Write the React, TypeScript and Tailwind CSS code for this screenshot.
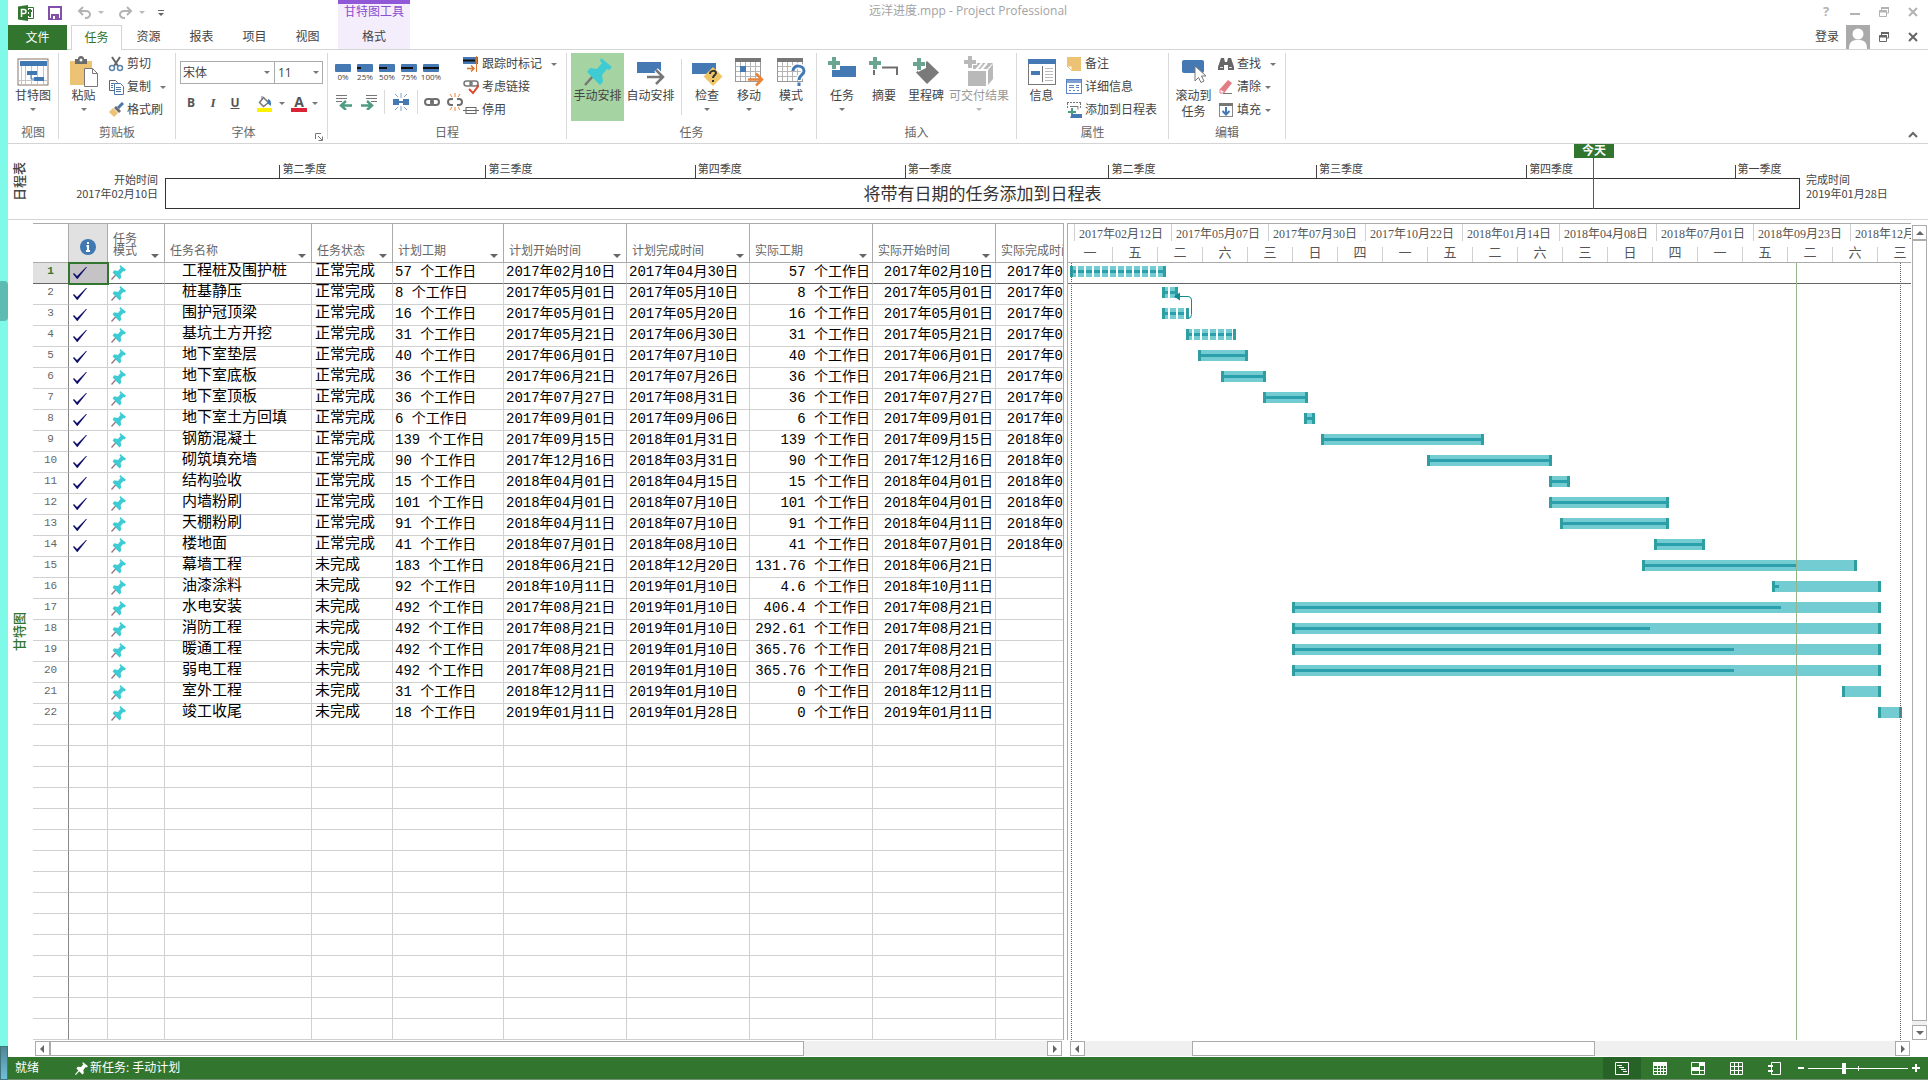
import type { ReactNode } from 'react';

const UI_FONT = "font-['Open_Sans','Noto_Sans_CJK_SC',sans-serif]";
const SHEET_FONT = "font-['Liberation_Mono','Noto_Sans_CJK_SC',monospace]";
const SCALE_FONT = "font-['Liberation_Serif','Noto_Sans_CJK_SC',serif]";

const ROW_COUNT = 37;
const PX_PER_DAY = 1.1536;
const ORIGIN = Date.UTC(2017, 1, 12);

type Task = {
  name: string;
  days: number;
  start: string;
  finish: string;
  actual: string;
  done: boolean;
  split?: boolean;
  progress?: number;
};

const TASKS: Task[] = [
  { name: '工程桩及围护桩', days: 57, start: '2017-02-10', finish: '2017-04-30', actual: '57', done: true, split: true },
  { name: '桩基静压', days: 8, start: '2017-05-01', finish: '2017-05-10', actual: '8', done: true, split: true },
  { name: '围护冠顶梁', days: 16, start: '2017-05-01', finish: '2017-05-20', actual: '16', done: true, split: true },
  { name: '基坑土方开挖', days: 31, start: '2017-05-21', finish: '2017-06-30', actual: '31', done: true, split: true },
  { name: '地下室垫层', days: 40, start: '2017-06-01', finish: '2017-07-10', actual: '40', done: true },
  { name: '地下室底板', days: 36, start: '2017-06-21', finish: '2017-07-26', actual: '36', done: true },
  { name: '地下室顶板', days: 36, start: '2017-07-27', finish: '2017-08-31', actual: '36', done: true },
  { name: '地下室土方回填', days: 6, start: '2017-09-01', finish: '2017-09-06', actual: '6', done: true },
  { name: '钢筋混凝土', days: 139, start: '2017-09-15', finish: '2018-01-31', actual: '139', done: true },
  { name: '砌筑填充墙', days: 90, start: '2017-12-16', finish: '2018-03-31', actual: '90', done: true },
  { name: '结构验收', days: 15, start: '2018-04-01', finish: '2018-04-15', actual: '15', done: true },
  { name: '内墙粉刷', days: 101, start: '2018-04-01', finish: '2018-07-10', actual: '101', done: true },
  { name: '天棚粉刷', days: 91, start: '2018-04-11', finish: '2018-07-10', actual: '91', done: true },
  { name: '楼地面', days: 41, start: '2018-07-01', finish: '2018-08-10', actual: '41', done: true },
  { name: '幕墙工程', days: 183, start: '2018-06-21', finish: '2018-12-20', actual: '131.76', done: false, progress: 0.715 },
  { name: '油漆涂料', days: 92, start: '2018-10-11', finish: '2019-01-10', actual: '4.6', done: false, progress: 0.06 },
  { name: '水电安装', days: 492, start: '2017-08-21', finish: '2019-01-10', actual: '406.4', done: false, progress: 0.83 },
  { name: '消防工程', days: 492, start: '2017-08-21', finish: '2019-01-10', actual: '292.61', done: false, progress: 0.608 },
  { name: '暖通工程', days: 492, start: '2017-08-21', finish: '2019-01-10', actual: '365.76', done: false, progress: 0.75 },
  { name: '弱电工程', days: 492, start: '2017-08-21', finish: '2019-01-10', actual: '365.76', done: false, progress: 0.75 },
  { name: '室外工程', days: 31, start: '2018-12-11', finish: '2019-01-10', actual: '0', done: false, progress: 0 },
  { name: '竣工收尾', days: 18, start: '2019-01-11', finish: '2019-01-28', actual: '0', done: false, progress: 0 },
];

const MAJOR = [
  '2017年02月12日', '2017年05月07日', '2017年07月30日', '2017年10月22日', '2018年01月14日',
  '2018年04月08日', '2018年07月01日', '2018年09月23日', '2018年12月16日',
];
const MINOR = '一五二六三日四一五二六三日四一五二六三'.split('');

const QUARTERS = [
  { label: '第二季度', at: 7 },
  { label: '第三季度', at: 19.6 },
  { label: '第四季度', at: 32.4 },
  { label: '第一季度', at: 45.25 },
  { label: '第二季度', at: 57.7 },
  { label: '第三季度', at: 70.4 },
  { label: '第四季度', at: 83.25 },
  { label: '第一季度', at: 96 },
];

const HEADERS = ['任务名称', '任务状态', '计划工期', '计划开始时间', '计划完成时间', '实际工期', '实际开始时间', '实际完成时间'];

const dayOffset = (date: string, extra = 0) => {
  const [y, m, d] = date.split('-').map(Number);
  return ((Date.UTC(y, m - 1, d) - ORIGIN) / 86400000 + extra) * PX_PER_DAY + 6;
};

const cnDate = (date: string) => {
  const [y, m, d] = date.split('-');
  return `${y}年${m}月${d}日`;
};

/* ---------- icons ---------- */

function Svg({ w, h, children, className = '' }: { w: number; h: number; children: ReactNode; className?: string }) {
  return (
    <svg width={w} height={h} viewBox={`0 0 ${w} ${h}`} fill="none" className={`shrink-0 ${className}`} aria-hidden="true">
      {children}
    </svg>
  );
}

const Caret = ({ className = '' }: { className?: string }) => (
  <Svg w={6} h={3} className={className}><path d="M0 0h6L3 3z" fill="#777" /></Svg>
);

const Pin = ({ size = 16, color = '#3fcbd3', needle = '#96707c' }: { size?: number; color?: string; needle?: string }) => (
  <svg width={size} height={size} viewBox="0 0 28 28" className="shrink-0" aria-hidden="true">
    <path d="M1 27L10 17" stroke={needle} strokeWidth="2.5" />
    <path d="M17 0l11 9-3 3-2-1-5 6 1 7-3 3L3 14l3-4 7 1 5-6-2-2z" fill={color} />
  </svg>
);

const RestoreIcon = ({ color }: { color: string }) => (
  <Svg w={12} h={12}>
    <path d="M3.500 4V1.500h7v5.500H8M1.500 4.500h7v6h-7z" stroke={color} />
    <path d="M1 5.500h8M3 2h8" stroke={color} strokeWidth="2" />
  </Svg>
);

const CloseIcon = ({ color }: { color: string }) => (
  <Svg w={10} h={10}><path d="M1 1l8 8M9 1L1 9" stroke={color} strokeWidth="2" /></Svg>
);

const GanttIcon = () => (
  <Svg w={32} h={28}>
    <rect x="1" y="1" width="30" height="26" fill="#fff" stroke="#8a7468" />
    <rect x="3" y="3" width="27" height="5" fill="#3f78b3" />
    <path d="M4.500 8v18M8.500 8v18M14.500 8v18M20.500 8v18M26.500 8v18M2 22.500h28" stroke="#c4c4c4" />
    <path d="M10 13h10v4H10zM17 19h10v4H17z" fill="#3f78b3" />
    <path d="M14 17v4h3" stroke="#3f78b3" />
  </Svg>
);

const PasteIcon = () => (
  <Svg w={30} h={32}>
    <path d="M1 5h22v24H1z" fill="#ecc375" />
    <path d="M6 3h3a3 3 0 016 0h3v5H6z" fill="#6b6b6b" />
    <circle cx="12" cy="4" r="1.500" fill="#fff" />
    <path d="M15.500 12.500h8l5 5v13h-13z" fill="#fff" stroke="#777" />
    <path d="M23.500 12.500v5h5" stroke="#777" />
  </Svg>
);

const CutIcon = () => (
  <Svg w={16} h={16}>
    <path d="M4 1l6 9M12 1L6 10" stroke="#666" strokeWidth="2" />
    <circle cx="4" cy="12" r="2.500" stroke="#5d84ad" strokeWidth="1.500" />
    <circle cx="12" cy="12" r="2.500" stroke="#5d84ad" strokeWidth="1.500" />
  </Svg>
);

const CopyIcon = () => (
  <Svg w={16} h={16}>
    <path d="M1.500 1.500h6l2 2v8h-8z" fill="#fff" stroke="#666" />
    <path d="M6.500 4.500h6l3 3v8h-9z" fill="#fff" stroke="#4b78a8" />
    <path d="M3 4.500h3M3 6.500h2M3 8.500h2M8 8.500h5M8 10.500h5M8 12.500h5" stroke="#4b78a8" />
  </Svg>
);

const BrushIcon = () => (
  <Svg w={16} h={16}>
    <path d="M15 1l-5 5" stroke="#4a76a8" strokeWidth="3" />
    <path d="M8 4l5 5-2 2-5-5z" fill="#6b6b6b" />
    <path d="M5 6l5 5-4 4-5-5z" fill="#ecc375" />
  </Svg>
);

const FillColorIcon = () => (
  <Svg w={17} h={17}>
    <path d="M7.500 2.500l5 5-5 4-4-4z" fill="#fff" stroke="#777" strokeWidth="1.500" />
    <path d="M6 5V1" stroke="#777" />
    <path d="M12 4c3 1 3.500 4 2.500 7L11.500 8z" fill="#3f78b3" />
    <rect x="1" y="13" width="15" height="4" fill="#fff200" />
  </Svg>
);

const ProgressIcon = ({ pct }: { pct: number }) => (
  <Svg w={16} h={8}>
    <rect width="16" height="8" rx="1" fill="#4479b4" />
    <rect x="0" y="3" width={(16 * pct) / 100} height="2" fill="#111" />
  </Svg>
);

const IndentIcon = ({ flip = false }: { flip?: boolean }) => (
  <Svg w={18} h={16} className={flip ? '-scale-x-100' : ''}>
    <path d="M1 1.500h11M1 4.500h11M1 7.500h6" stroke="#777" />
    <path d="M17 11.500H7M11 7l-5 4.500 5 4.500" stroke="#4f9c80" strokeWidth="2.500" />
  </Svg>
);

const SplitIcon = () => (
  <Svg w={18} h={18}>
    <path d="M1 6h6v6H1zM11 6h6v6h-6z" fill="#4479b4" />
    <path d="M9 0v5M9 13v5M3 1l3 3M15 1l-3 3M3 17l3-3M15 17l-3-3" stroke="#7da6d0" />
    <path d="M5 9h8" stroke="#4479b4" strokeWidth="2" />
  </Svg>
);

const LinkIcon = () => (
  <Svg w={16} h={10}>
    <rect x="1" y="2" width="8" height="6" rx="3" stroke="#6e6e6e" strokeWidth="2" />
    <rect x="7" y="2" width="8" height="6" rx="3" stroke="#6e6e6e" strokeWidth="2" />
  </Svg>
);

const UnlinkIcon = () => (
  <Svg w={16} h={18}>
    <path d="M6 6H4a3 3 0 000 6h2M10 6h2a3 3 0 010 6h-2" stroke="#6e6e6e" strokeWidth="2" />
    <path d="M8 0v4M8 14v4M3 1l2 3M13 1l-2 3M3 17l2-3M13 17l-2-3" stroke="#e8853a" />
  </Svg>
);

const TrackIcon = () => (
  <Svg w={16} h={16}>
    <path d="M0 1h15v7H0z" fill="#4479b4" />
    <path d="M0 4.500h12" stroke="#111" strokeWidth="2" />
    <path d="M13.500 0v16" stroke="#d8762e" />
    <path d="M4 12.500h7M8 9.500l3 3-3 3" stroke="#d8762e" strokeWidth="1.500" />
  </Svg>
);

const RespectIcon = () => (
  <Svg w={16} h={16}>
    <rect x="1" y="2" width="8" height="5" rx="2.500" stroke="#777" strokeWidth="1.500" />
    <rect x="7" y="2" width="8" height="5" rx="2.500" stroke="#777" strokeWidth="1.500" />
    <path d="M6 10l4 4 6-8" stroke="#d84b32" strokeWidth="2" />
  </Svg>
);

const InactiveIcon = () => (
  <Svg w={16} h={16}>
    <rect x="3" y="5.500" width="10" height="6" stroke="#666" />
    <path d="M0 8.500h16" stroke="#666" />
  </Svg>
);

const AutoIcon = () => (
  <Svg w={30} h={28}>
    <path d="M1 4h24v11H1z" fill="#4479b4" />
    <path d="M11 19h15M20 12l7 7-7 7" stroke="#fff" strokeWidth="5" />
    <path d="M11 19h15M20 12l7 7-7 7" stroke="#777" strokeWidth="2.500" />
  </Svg>
);

const InspectIcon = () => (
  <Svg w={32} h={28}>
    <path d="M1 5h24v11H1z" fill="#4479b4" />
    <path d="M22 9l9.500 9.500L22 28l-9.500-9.500z" fill="#f0c567" />
    <path d="M19 16c0-4 6-4 6-1 0 2-3 2-3 5M22 22v2" stroke="#333" strokeWidth="2" />
  </Svg>
);

const CalendarGrid = () => (
  <>
    <rect x="1.500" y="1.500" width="25" height="23" fill="#fff" stroke="#999" />
    <path d="M1 1h26v4H1z" fill="#777" />
    <path d="M6.500 5v19M11.500 5v19M16.500 5v19M21.500 5v19M2 9.500h24M2 14.500h24M2 19.500h24" stroke="#b5b5b5" />
  </>
);

const MoveIcon = () => (
  <Svg w={30} h={30}>
    <CalendarGrid />
    <path d="M6 9h6v6H6z" fill="#4479b4" />
    <path d="M14 22.500h13M22 16.500l6 6-6 6" stroke="#e8853a" strokeWidth="2.500" />
  </Svg>
);

const ModeIcon = () => (
  <Svg w={30} h={30}>
    <CalendarGrid />
    <path d="M17 14c0-7 11-6 11 0 0 4-5 4-5 9M23 26v3" stroke="#fff" strokeWidth="6" />
    <path d="M17 14c0-7 11-6 11 0 0 4-5 4-5 9M23 25.500v3.500" stroke="#4479b4" strokeWidth="3" />
  </Svg>
);

const Plus = ({ color = '#69a58f' }: { color?: string }) => (
  <path d="M4 0h4v4h4v4H8v4H4V8H0V4h4z" fill={color} />
);

const InsertTaskIcon = () => (
  <Svg w={28} h={30}>
    <path d="M4 9h24v11H4z" fill="#4479b4" />
    <path d="M0 8h13V4h-1v9H3z" fill="#fff" />
    <Plus />
  </Svg>
);

const SummaryIcon = () => (
  <Svg w={30} h={30}>
    <path d="M5 18v-7.500h23V18" stroke="#6e6e6e" strokeWidth="2" />
    <path d="M2 8h13V3h-2v10H4z" fill="#fff" />
    <Plus />
  </Svg>
);

const MilestoneIcon = () => (
  <Svg w={26} h={28}>
    <path d="M14 3l12 11.500L14 26 3 14.500z" fill="#7a7a7a" />
    <path d="M3 3h10v7l-8 4z" fill="#fff" />
    <Plus />
  </Svg>
);

const DeliverableIcon = () => (
  <Svg w={30} h={32}>
    <path d="M4 15h18v15H4zM5 13l6-6h18l-6 6zM24 14l5-6v15l-5 6z" fill="#b9b9b9" />
    <path d="M12 14l6-7M17 14l6-7" stroke="#fff" strokeWidth="2" />
    <path d="M0 9h9v4H3zM9 4h4v5H9z" fill="#fff" />
    <Plus color="#b9b9b9" />
  </Svg>
);

const InfoIcon = () => (
  <Svg w={28} h={28}>
    <rect x=".5" y="1.500" width="27" height="25" fill="#fff" stroke="#777" />
    <path d="M0 1h28v5H0z" fill="#4479b4" />
    <path d="M3 13h9v4H3z" fill="#4479b4" />
    <path d="M14.500 8v16" stroke="#777" />
    <path d="M17 10.500h8M17 13.500h8M17 16.500h8M17 19.500h8M17 22.500h8" stroke="#bbb" />
  </Svg>
);

const NoteIcon = () => (
  <Svg w={16} h={16}>
    <path d="M1 1h14v14H6L1 10z" fill="#ecc375" />
    <path d="M1 10h5v5z" fill="#fff" stroke="#ecc375" />
  </Svg>
);

const DetailIcon = () => (
  <Svg w={16} h={16}>
    <rect x=".5" y=".5" width="15" height="14" fill="#fff" stroke="#5b84c4" />
    <path d="M1 1h14v3H1z" fill="#7fa0d4" />
    <path d="M3 6.500h5M3 8.500h5M10 6.500h3M10 8.500h3M3 11.500h2M7 11.500h2M11 11.500h2" stroke="#5b84c4" />
  </Svg>
);

const AddTimelineIcon = () => (
  <Svg w={16} h={16}>
    <path d="M1.500 6V1M14.500 6V1M1 .5h14" stroke="#777" strokeDasharray="2 1" />
    <path d="M4 4.500h8v3" stroke="#777" />
    <path d="M6 6v8M2 10h8" stroke="#4f9c80" strokeWidth="2" />
    <path d="M6 12h10v4H4z" fill="#4479b4" />
  </Svg>
);

const ScrollToIcon = () => (
  <Svg w={26} h={28}>
    <rect x="1" y="2" width="22" height="13" rx="2" fill="#4479b4" />
    <path d="M14 8v15l3.500-3.500 2.500 5 3-1.500-2.500-5h4.500z" fill="#fff" stroke="#777" />
  </Svg>
);

const FindIcon = () => (
  <Svg w={16} h={16}>
    <path d="M3 2h3l1 4h2l1-4h3l3 9v3h-6V9H6v5H0v-3z" fill="#666" />
    <path d="M2 11.500h3M11 11.500h3" stroke="#ddd" />
  </Svg>
);

const EraserIcon = () => (
  <Svg w={16} h={16}>
    <path d="M10 1l4 3-7 9-5-3z" fill="#e47c88" />
    <path d="M2 10l5 3-2 1H2z" fill="#fff" stroke="#e47c88" />
    <path d="M5 14.500h9" stroke="#777" />
  </Svg>
);

const FillIcon = () => (
  <Svg w={16} h={16}>
    <rect x="1.500" y="1.500" width="13" height="13" fill="#fff" stroke="#888" />
    <path d="M1 1h14v3H1z" fill="#777" />
    <path d="M8 5v8M4.500 9L8 12.500 11.500 9" stroke="#4479b4" strokeWidth="2" />
  </Svg>
);

/* ---------- ribbon ---------- */

function BigButton({ icon, label, width, caret, active, disabled }: {
  icon: ReactNode; label: string; width: string; caret?: boolean; active?: boolean; disabled?: boolean;
}) {
  return (
    <button
      disabled={disabled}
      className={`flex h-[68px] shrink-0 flex-col items-center pt-[3px] leading-4 ${width} ${active ? 'bg-[#a5d3a1]' : ''} ${disabled ? 'text-[#999]' : ''}`}
    >
      <span className="flex h-8 items-center">{icon}</span>
      <span className="-mx-2 whitespace-pre-line">{label}</span>
      {caret && <Caret className={`mt-1 ${disabled ? 'opacity-50' : ''}`} />}
    </button>
  );
}

function SmallButton({ icon, label, caret }: { icon: ReactNode; label: string; caret?: string }) {
  return (
    <button className="flex h-[23px] items-center pb-px text-left leading-4 whitespace-nowrap">
      {icon}
      <span className="ml-[3px]">{label}</span>
      {caret && <Caret className={caret} />}
    </button>
  );
}

function Group({ label, width, children, launcher }: { label: string; width: string; children: ReactNode; launcher?: boolean }) {
  return (
    <section className={`mt-[3px] mb-1 flex shrink-0 flex-col border-r border-[#dadada] ${width}`}>
      <div className="flex h-[69px] shrink-0 items-start">{children}</div>
      <div className={`relative pt-[3px] text-center leading-4 text-[#666] ${launcher ? 'pr-4' : ''}`}>
        {label}
        {launcher && (
          <button aria-label="字体设置" className="absolute right-1 bottom-0">
            <Svg w={8} h={8}><path d="M.5 6V.5H6M3 3l4 4M7.500 3.500v4h-4" stroke="#777" /></Svg>
          </button>
        )}
      </div>
    </section>
  );
}

const VRule = () => <span className="h-6 w-px bg-[#dadada]" />;

function TitleBar() {
  return (
    <header className="grid h-[25px] grid-cols-[1fr_auto_1fr]">
      <div className="flex">
        <div className="flex w-[330px] items-center pl-[10px]">
          <Svg w={16} h={16}>
            <path d="M0 1.500L10 0v16L0 14.500z" fill="#31752f" />
            <path d="M10 2.500h5.500v11H10" fill="#fff" stroke="#31752f" />
            <path d="M10 6h4M10 10h3M12 4v8" stroke="#31752f" strokeWidth="2" />
            <path d="M3.500 12V4.500H6a2 2 0 010 4H3.500" stroke="#fff" strokeWidth="1.500" />
          </Svg>
          <button aria-label="保存" className="ml-[14px]">
            <Svg w={14} h={14}>
              <path d="M1 1h12v12H1z" stroke="#8250a8" strokeWidth="2" />
              <path d="M3 8h8v5H3z" fill="#8250a8" />
              <path d="M5 10h2v3H5z" fill="#fff" />
            </Svg>
          </button>
          <button aria-label="撤消" className="ml-[15px] flex items-center gap-[6px]">
            <Svg w={15} h={13}><path d="M6 1L2 5l4 4M2 5h7a4 3.500 0 010 7H8" stroke="#b3b3b3" strokeWidth="2" /></Svg>
            <Caret className="opacity-50" />
          </button>
          <button aria-label="恢复" className="ml-[14px] flex items-center gap-[6px]">
            <Svg w={15} h={13}><path d="M9 1l4 4-4 4M13 5H6a4 3.500 0 000 7h1" stroke="#b3b3b3" strokeWidth="2" /></Svg>
            <Caret className="opacity-50" />
          </button>
          <button aria-label="自定义快速访问工具栏" className="ml-[13px]">
            <Svg w={6} h={6}><path d="M0 .5h6" stroke="#666" /><path d="M0 3h6L3 6z" fill="#666" /></Svg>
          </button>
        </div>
        <div className="w-[72px] border-t-4 border-[#9058d6] bg-[#f4eefc] text-center leading-4 text-[#8a4fd0]">甘特图工具</div>
      </div>
      <h1 className="pt-[3px] leading-4 text-[#a3a3a3]">远洋进度.mpp - Project Professional</h1>
      <div className="flex items-center justify-end gap-[18px] pr-[10px] pb-px">
        <button aria-label="帮助" className="w-3 text-[13px] font-bold text-[#b3b3b3]">?</button>
        <button aria-label="最小化"><Svg w={10} h={10}><path d="M0 7h10" stroke="#b3b3b3" strokeWidth="2" /></Svg></button>
        <button aria-label="还原"><RestoreIcon color="#b3b3b3" /></button>
        <button aria-label="关闭"><CloseIcon color="#b3b3b3" /></button>
      </div>
    </header>
  );
}

function TabBar() {
  return (
    <nav className="flex h-[25px] border-b border-[#d5d5d5]">
      <button className="h-[25px] w-[59px] bg-[#31752f] text-white">文件</button>
      <button className="ml-1 h-[25px] w-[51px] border border-b-0 border-[#d5d5d5] bg-white text-[#31752f]">任务</button>
      {['资源', '报表', '项目', '视图'].map(tab => (
        <button key={tab} className="w-[53px]">{tab}</button>
      ))}
      <button className="ml-1 w-[72px] bg-[#f4eefc]">格式</button>
      <div className="ml-auto flex items-center pr-[10px]">
        <a href="#login" className="mr-[7px] pb-px">登录</a>
        <Svg w={24} h={24} className="mr-2">
          <rect width="24" height="24" fill="#aaa" />
          <circle cx="12" cy="9" r="5.500" fill="#fff" />
          <path d="M3 24c0-8 4-9 9-9s9 1 9 9z" fill="#fff" />
        </Svg>
        <button aria-label="还原窗口" className="mr-[18px]"><RestoreIcon color="#666" /></button>
        <button aria-label="关闭窗口"><CloseIcon color="#666" /></button>
      </div>
    </nav>
  );
}

function Ribbon() {
  return (
    <div className="flex h-[94px] border-b border-[#d5d5d5]">
      <Group label="视图" width="w-[51px]">
        <BigButton icon={<GanttIcon />} label="甘特图" width="w-[50px]" caret />
      </Group>
      <Group label="剪贴板" width="w-[117px]">
        <BigButton icon={<PasteIcon />} label="粘贴" width="w-[49px]" caret />
        <div className="flex flex-col">
          <SmallButton icon={<CutIcon />} label="剪切" />
          <SmallButton icon={<CopyIcon />} label="复制" caret="ml-[9px]" />
          <SmallButton icon={<BrushIcon />} label="格式刷" />
        </div>
      </Group>
      <Group label="字体" width="w-[152px]" launcher>
        <div className="pt-[8px] pl-1">
          <div className="flex">
            <div className="relative">
              <select aria-label="字体名称" className="h-[23px] w-[95px] appearance-none border border-[#ababab] bg-white pl-[2px]">
                <option>宋体</option>
              </select>
              <Caret className="pointer-events-none absolute top-[10px] right-[5px]" />
            </div>
            <div className="relative -ml-px">
              <select aria-label="字号" className="h-[23px] w-[49px] appearance-none border border-[#ababab] bg-white pl-[3px]">
                <option>11</option>
              </select>
              <Caret className="pointer-events-none absolute top-[10px] right-[4px]" />
            </div>
          </div>
          <div className="mt-[7px] flex h-6 items-center text-[12px] text-[#555]">
            <button className="w-[22px] font-bold">B</button>
            <button className="w-[22px] font-['Liberation_Serif',serif] text-[13px] font-bold italic">I</button>
            <button className="w-[22px] font-bold underline">U</button>
            <span className="mx-[4px]"><VRule /></span>
            <button aria-label="背景色" className="flex items-center gap-[6px] pl-[2px]"><FillColorIcon /><Caret /></button>
            <button aria-label="字体颜色" className="ml-[6px] flex items-center gap-[5px]">
              <span className="w-4 border-b-4 border-[#dc2335] text-center text-[14px] leading-[13px] font-bold">A</span>
              <Caret />
            </button>
          </div>
        </div>
      </Group>
      <Group label="日程" width="w-[239px]">
        <div className="w-[135px] pt-[11px] pl-[7px]">
          <div className="flex h-[26px] gap-[6px]">
            {[0, 25, 50, 75, 100].map(p => (
              <button key={p} className="flex w-4 flex-col items-center text-[8px] leading-[10px]">
                <ProgressIcon pct={p} />
                <span>{p}%</span>
              </button>
            ))}
          </div>
          <div className="flex h-6 items-center justify-between">
            <button aria-label="降级"><IndentIcon /></button>
            <button aria-label="升级"><IndentIcon flip /></button>
            <VRule />
            <button aria-label="拆分任务"><SplitIcon /></button>
            <VRule />
            <button aria-label="链接任务"><LinkIcon /></button>
            <button aria-label="取消链接"><UnlinkIcon /></button>
          </div>
        </div>
        <div className="flex flex-col">
          <SmallButton icon={<TrackIcon />} label="跟踪时标记" caret="ml-[9px]" />
          <SmallButton icon={<RespectIcon />} label="考虑链接" />
          <SmallButton icon={<InactiveIcon />} label="停用" />
        </div>
      </Group>
      <Group label="任务" width="w-[250px]">
        <span className="w-1" />
        <BigButton icon={<Pin size={28} needle="#777" />} label="手动安排" width="w-[53px]" active />
        <BigButton icon={<AutoIcon />} label="自动安排" width="w-[53px]" />
        <span className="mx-1 mt-[6px] h-14 w-px bg-[#dadada]" />
        <BigButton icon={<InspectIcon />} label="检查" width="w-[42px]" caret />
        <BigButton icon={<MoveIcon />} label="移动" width="w-[42px]" caret />
        <BigButton icon={<ModeIcon />} label="模式" width="w-[42px]" caret />
      </Group>
      <Group label="插入" width="w-[200px]">
        <span className="w-1" />
        <BigButton icon={<InsertTaskIcon />} label="任务" width="w-[42px]" caret />
        <BigButton icon={<SummaryIcon />} label="摘要" width="w-[42px]" />
        <BigButton icon={<MilestoneIcon />} label="里程碑" width="w-[42px]" />
        <BigButton icon={<DeliverableIcon />} label="可交付结果" width="w-[64px]" caret disabled />
      </Group>
      <Group label="属性" width="w-[152px]">
        <BigButton icon={<InfoIcon />} label="信息" width="w-[49px]" />
        <div className="flex flex-col">
          <SmallButton icon={<NoteIcon />} label="备注" />
          <SmallButton icon={<DetailIcon />} label="详细信息" />
          <SmallButton icon={<AddTimelineIcon />} label="添加到日程表" />
        </div>
      </Group>
      <Group label="编辑" width="w-[117px]">
        <BigButton icon={<ScrollToIcon />} label={'滚动到\n任务'} width="w-[49px]" />
        <div className="flex flex-col">
          <SmallButton icon={<FindIcon />} label="查找" caret="ml-[9px]" />
          <SmallButton icon={<EraserIcon />} label="清除" caret="ml-[4px]" />
          <SmallButton icon={<FillIcon />} label="填充" caret="ml-[4px]" />
        </div>
      </Group>
      <button aria-label="折叠功能区" className="mt-auto mr-[10px] mb-[5px] ml-auto">
        <Svg w={10} h={7}><path d="M1 6l4-4 4 4" stroke="#666" strokeWidth="2" /></Svg>
      </button>
    </div>
  );
}

/* ---------- timeline ---------- */

function SideLabel({ children, className }: { children: ReactNode; className: string }) {
  return (
    <div className={`flex w-[25px] shrink-0 items-center justify-center pr-1 ${className}`}>
      <span className="rotate-180 text-[13px] leading-4 font-medium [text-orientation:sideways] [writing-mode:vertical-rl]">{children}</span>
    </div>
  );
}

function Timeline() {
  return (
    <div className="flex h-[76px] border-b border-[#d5d5d5] font-['Noto_Sans_CJK_SC',sans-serif] text-[11px] leading-[14px]">
      <SideLabel className="text-[#444]">日程表</SideLabel>
      <p className="w-[132px] shrink-0 pt-[28px] pr-[7px] text-right text-[#444]">开始时间<br />2017年02月10日</p>
      <div className="relative flex-1 pt-[34px]">
        <div className="flex h-[31px] items-center justify-center border border-[#333] pb-[2px] text-[17px] text-[#333]">
          将带有日期的任务添加到日程表
        </div>
        {QUARTERS.map((q, i) => (
          <span key={i} className="absolute top-[21px] h-[13px] border-l border-[#444] pl-[2px] leading-[6px] text-[#444]" style={{ left: `${q.at}%` }}>
            {q.label}
          </span>
        ))}
        <div className="absolute top-0 left-[87.4%] flex h-[65px] w-10 -translate-x-1/2 flex-col items-center">
          <span className="h-[14px] w-full bg-[#31752f] text-center text-[12px] leading-3 font-bold text-white">今天</span>
          <span className="w-px flex-1 bg-[#31752f]" />
        </div>
      </div>
      <p className="w-[128px] shrink-0 pt-[28px] pl-[6px] text-[#444]">完成时间<br />2019年01月28日</p>
    </div>
  );
}

/* ---------- sheet ---------- */

const HeaderArrow = () => <Svg w={8} h={4}><path d="M0 0h8L4 4z" fill="#666" /></Svg>;

function Sheet() {
  const cell = 'border-r border-b border-[#d0d0d0] p-0 pb-[3px] whitespace-nowrap';
  return (
    <div className="w-[1031px] overflow-hidden border-t border-r border-[#ababab]">
      <table className={`w-[1086px] table-fixed border-separate border-spacing-0 text-[14px] leading-4 text-black ${SHEET_FONT}`}>
        <colgroup>
          <col className="w-[36px]" />
          <col className="w-[39px]" />
          <col className="w-[57px]" />
          <col className="w-[147px]" />
          <col className="w-[81px]" />
          <col className="w-[111px]" />
          <col className="w-[123px]" />
          <col className="w-[123px]" />
          <col className="w-[123px]" />
          <col className="w-[123px]" />
          <col className="w-[123px]" />
        </colgroup>
        <thead>
          <tr className="h-[39px] text-[12px] text-[#666] [&>th]:border-b [&>th]:border-[#ababab] [&>th]:p-0 [&>th]:font-normal">
            <th className="border-r" />
            <th className="border-r bg-[#e1e1e1]" aria-label="标记">
              <Svg w={16} h={16} className="mx-auto mt-2">
                <circle cx="8" cy="8" r="8" fill="#3f78b3" />
                <path d="M8 3v2M6.500 7H8v5M6 12h4" stroke="#fff" strokeWidth="2" />
              </Svg>
            </th>
            <th className="border-r align-bottom">
              <div className="flex items-end justify-between pr-[5px] pb-[4px] pl-[5px]">
                <span className="w-6 leading-3">任务模式</span>
                <HeaderArrow />
              </div>
            </th>
            {HEADERS.map(h => (
              <th key={h} className="border-r align-bottom">
                <div className="flex items-end justify-between pr-[5px] pb-[4px] pl-[5px]">
                  <span className="leading-3">{h}</span>
                  <HeaderArrow />
                </div>
              </th>
            ))}
          </tr>
        </thead>
        <tbody>
          {Array.from({ length: ROW_COUNT }, (_, i) => {
            const t = TASKS[i];
            const first = i === 0;
            return (
              <tr key={i} className={`h-[21px] ${first ? '[&>td]:border-b-[#666] [&>th]:border-b-[#666]' : ''}`}>
                <th
                  className={`border-r border-b border-[#d0d0d0] border-r-[#888] p-0 pb-1 text-center text-[11px] leading-4 ${
                    first ? 'bg-[#e1e1e1] font-bold text-[#31752f]' : 'font-normal text-[#666]'
                  }`}
                >
                  {t ? i + 1 : ''}
                </th>
                <td className={`${cell} ${first ? 'bg-[#c6c3c6] outline-2 -outline-offset-1 outline-[#31752f]' : ''}`}>
                  {t?.done && (
                    <Svg w={16} h={14} className="mt-[3px] ml-[3px]">
                      <path d="M1 8l1-1 3 3L14 1h1L5.500 13H5z" fill="#10106c" />
                    </Svg>
                  )}
                </td>
                <td className={`${cell} pl-[3px]`}>{t && <div className="pt-[2px]"><Pin size={15} /></div>}</td>
                <td className={`${cell} pl-[17px] text-[15px]`}>{t?.name}</td>
                <td className={`${cell} pl-[3px] text-[15px]`}>{t && (t.done ? '正常完成' : '未完成')}</td>
                <td className={`${cell} pl-[2px]`}>{t && `${t.days} 个工作日`}</td>
                <td className={`${cell} pl-[2px]`}>{t && cnDate(t.start)}</td>
                <td className={`${cell} pl-[2px]`}>{t && cnDate(t.finish)}</td>
                <td className={`${cell} pr-[2px] text-right`}>{t && `${t.actual} 个工作日`}</td>
                <td className={`${cell} pr-[2px] text-right`}>{t && cnDate(t.start)}</td>
                <td className={`${cell} pr-[2px] text-right`}>{t?.done && cnDate(t.finish)}</td>
              </tr>
            );
          })}
        </tbody>
      </table>
    </div>
  );
}

/* ---------- chart ---------- */

function Bar({ task, row }: { task: Task; row: number }) {
  const left = Math.floor(dayOffset(task.start)) - 1;
  const width = Math.round(dayOffset(task.finish, 1)) + 2 - left;
  const progress = task.progress ?? 1;
  return (
    <div className="absolute h-[11px]" style={{ left, top: row * 21 + 3, width }}>
      <div
        className={`flex h-full items-center ${
          task.split ? 'bg-[repeating-linear-gradient(90deg,#72ccd2_0_6px,#fff_6px_8px)]' : 'bg-[#72ccd2]'
        }`}
      >
        <div
          className={`h-[3px] ${task.split ? 'bg-[repeating-linear-gradient(90deg,#2b9fac_0_6px,#fff_6px_8px)]' : 'bg-[#2b9fac]'}`}
          style={{ width: `${progress * 100}%` }}
        />
      </div>
      <span className="absolute inset-y-0 left-0 w-[3px] bg-[#2f9ea0]" />
      <span className="absolute inset-y-0 right-0 w-[3px] bg-[#2f9ea0]" />
    </div>
  );
}

function Chart() {
  return (
    <div className="flex min-w-0 flex-1 flex-col overflow-hidden border-t border-l border-[#ababab]">
      <div className={`h-[39px] border-b border-[#ababab] text-[12px] whitespace-nowrap text-[#555] ${SCALE_FONT}`}>
        <div className="flex h-[17px] pl-[6px] leading-5">
          {MAJOR.map(d => (
            <span key={d} className="w-[97px] shrink-0 border-l border-[#d0d0d0] pl-[4px]">{d}</span>
          ))}
        </div>
        <div className="mt-[6px] flex h-[15px] text-center text-[13px] leading-3">
          {MINOR.map((d, i) => (
            <span key={i} className="w-[45px] shrink-0 border-r border-[#d0d0d0]">{d}</span>
          ))}
        </div>
      </div>
      <div className="relative flex-1">
        <div className="h-[21px] border-b border-[#666]" />
        {TASKS.map((t, i) => <Bar key={t.name} task={t} row={i} />)}
        <svg className="absolute top-0 left-0" width="140" height="64" fill="none" aria-hidden="true">
          <path d="M120 55.500q3.500 0 3.500-4V37q0-3.500-3.500-3.500h-10" stroke="#12898c" />
          <path d="M106 33.500l6-4v8z" fill="#12898c" />
        </svg>
        <span className="absolute inset-y-0 left-[3px] border-l border-dotted border-[#666]" />
        <span className="absolute inset-y-0 left-[832px] border-l border-dotted border-[#666]" />
        <span className="absolute inset-y-0 left-[728px] w-px bg-[#94b48c]" />
      </div>
    </div>
  );
}

/* ---------- scrollbars ---------- */

function ScrollArrow({ dir, label }: { dir: 'left' | 'right' | 'up' | 'down'; label: string }) {
  const shape = { left: 'M8 3v8L4 7z', right: 'M5 3v8l4-4z', up: 'M3 9h8L7 5z', down: 'M3 5h8L7 9z' }[dir];
  return (
    <button aria-label={label} className="flex h-[15px] w-[15px] shrink-0 items-center justify-center border border-[#ababab] bg-white">
      <Svg w={13} h={13}><path d={shape} fill="#666" /></Svg>
    </button>
  );
}

function StatusBar() {
  const view = 'flex h-full w-[38px] items-center justify-center';
  return (
    <footer className="flex h-[23px] items-center border-b border-[#6f8f6e] bg-[#31752f] text-white">
      <span className="w-[67px] pl-[7px]">就绪</span>
      <Pin size={13} color="#fff" needle="#fff" />
      <span className="ml-[2px]">新任务: 手动计划</span>
      <div className="ml-auto flex h-full items-center">
        <button aria-label="甘特图" className={`${view} bg-[#276226]`}>
          <Svg w={14} h={13}><path d="M.5.5h13v12H.5zM2 3.500h5M4 5.500h5M6 7.500h5M8 9.500h4" stroke="#fff" /></Svg>
        </button>
        <button aria-label="任务分配状况" className={view}>
          <Svg w={14} h={13}><path d="M0 0h14v4H0z" fill="#fff" /><path d="M.5 4v8.500h13V4M4.500 4v8M7.500 4v8M10.500 4v8M1 6.500h12M1 9.500h12" stroke="#fff" /></Svg>
        </button>
        <button aria-label="工作组规划器" className={view}>
          <Svg w={14} h={13}><path d="M.5.5h13v12H.5zM0 8.500h14M8.500 0v12" stroke="#fff" /><path d="M9 0h5v4H9zM0 5h8v3H0z" fill="#fff" /></Svg>
        </button>
        <button aria-label="资源工作表" className={view}>
          <Svg w={13} h={13}><path d="M.5.5h12v12H.5zM4.500 0v13M8.500 0v13M0 4.500h13M0 8.500h13" stroke="#fff" /></Svg>
        </button>
        <button aria-label="报表" className={view}>
          <Svg w={13} h={13}><path d="M3.500 3V.5h9v12h-9V10M3.500 5v3" stroke="#fff" /><path d="M0 4h5M0 9h5" stroke="#fff" strokeWidth="2" /></Svg>
        </button>
        <button aria-label="缩小" className="ml-[5px]"><Svg w={6} h={10}><path d="M0 5h6" stroke="#fff" strokeWidth="2" /></Svg></button>
        <input
          type="range"
          aria-label="显示比例"
          min={0}
          max={100}
          defaultValue={35}
          className="mx-1 h-3 w-[100px] appearance-none bg-[linear-gradient(#fff,#fff),linear-gradient(#fff,#fff)] bg-[length:100%_1px,1px_5px] bg-[position:center,center] bg-no-repeat [&::-webkit-slider-thumb]:h-[11px] [&::-webkit-slider-thumb]:w-1 [&::-webkit-slider-thumb]:appearance-none [&::-webkit-slider-thumb]:bg-white"
        />
        <button aria-label="放大" className="mr-2"><Svg w={8} h={8}><path d="M0 4h8M4 0v8" stroke="#fff" strokeWidth="2" /></Svg></button>
      </div>
    </footer>
  );
}

export default function App() {
  return (
    <div className={`flex min-h-screen bg-white text-[12px] text-[#444] ${UI_FONT}`}>
      <div className="flex w-2 shrink-0 flex-col bg-[#80fae8]">
        <span className="mt-[281px] h-10 rounded-r bg-[#5cbcb2]" />
        <span className="mt-auto h-[34px] border border-[#41767e] bg-linear-to-b from-[#4f8795] to-[#6fc0dc]" />
      </div>
      <div className="flex min-w-0 flex-1 flex-col">
        <TitleBar />
        <TabBar />
        <Ribbon />
        <Timeline />
        <div className="mt-[3px] flex flex-1">
          <SideLabel className="font-bold text-[#31752f]">甘特图</SideLabel>
          <Sheet />
          <div className="w-[3px] shrink-0" />
          <Chart />
          <div className="ml-px flex w-4 shrink-0 flex-col pt-[2px]">
            <ScrollArrow dir="up" label="向上滚动" />
            <div className="flex w-[15px] flex-1 flex-col bg-[#f0f0f0] pb-1">
              <div className="flex-1 border border-[#ababab] bg-white" />
            </div>
            <ScrollArrow dir="down" label="向下滚动" />
          </div>
        </div>
        <div className="flex h-[17px] py-px pr-[18px] pl-[27px]">
          <div className="flex w-[1027px] bg-[#f0f0f0]">
            <ScrollArrow dir="left" label="表格向左滚动" />
            <div className="w-[754px] border border-[#ababab] bg-white" />
            <span className="flex-1" />
            <ScrollArrow dir="right" label="表格向右滚动" />
          </div>
          <div className="ml-2 flex flex-1 bg-[#f0f0f0]">
            <ScrollArrow dir="left" label="图表向左滚动" />
            <span className="flex-[107]" />
            <div className="flex-[402] border border-[#ababab] bg-white" />
            <span className="flex-[301]" />
            <ScrollArrow dir="right" label="图表向右滚动" />
          </div>
        </div>
        <StatusBar />
      </div>
    </div>
  );
}
